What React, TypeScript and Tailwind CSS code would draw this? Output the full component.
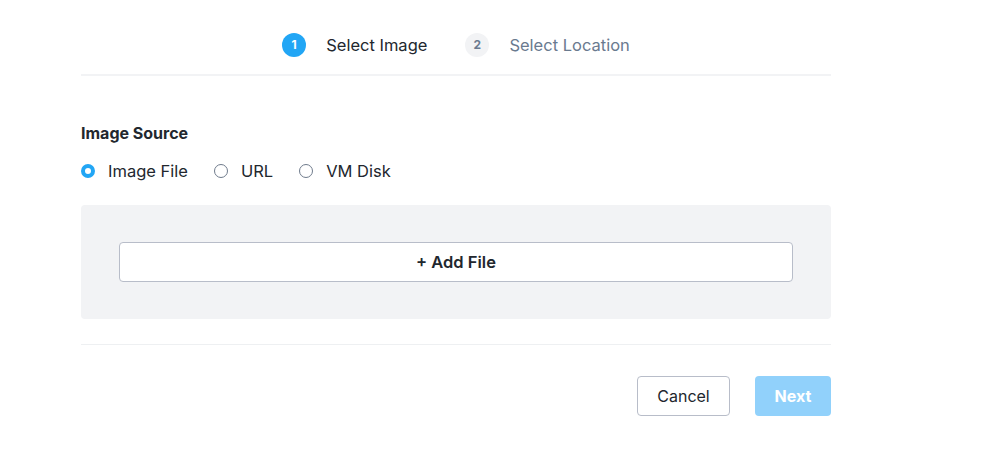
import React from "react";

export default function App() {
  return (
    <div className="w-[1002px] h-[462px] bg-white" style={{ fontFamily: 'Inter, "Liberation Sans", sans-serif' }}>
      <div className="ml-[81px] w-[750px]">
        <div className="h-[76px] border-b-2 border-[#f2f3f5] flex items-center justify-center pt-[16px]">
          <div className="flex items-center gap-[20px]">
            <div className="w-[24px] h-[24px] rounded-full bg-[#22a6f5] text-white text-[12px] font-bold flex items-center justify-center">1</div>
            <span className="text-[16.5px] text-[#22272e]">Select Image</span>
          </div>
          <div className="flex items-center gap-[20px] ml-[38px]">
            <div className="w-[24px] h-[24px] rounded-full bg-[#f2f3f5] text-[#6a7a8f] text-[12px] font-bold flex items-center justify-center">2</div>
            <span className="text-[16.5px] text-[#6a7a8f]">Select Location</span>
          </div>
        </div>
        <div className="pt-[47px]">
          <div className="text-[16px] font-bold text-[#22272e] leading-[20px]">Image Source</div>
          <div className="flex items-center mt-[18px] h-[20px] text-[16.5px] text-[#22272e]">
            <span className="w-[14px] h-[14px] rounded-full border-[4px] border-[#22a6f5] bg-white"></span>
            <span className="ml-[13px]">Image File</span>
            <span className="ml-[26px] w-[14px] h-[14px] rounded-full border border-[#6f7b8c] bg-white"></span>
            <span className="ml-[13px]">URL</span>
            <span className="ml-[26px] w-[14px] h-[14px] rounded-full border border-[#6f7b8c] bg-white"></span>
            <span className="ml-[13px]">VM Disk</span>
          </div>
          <div className="mt-[24px] h-[114px] rounded-[4px] bg-[#f2f3f5] px-[38px] flex items-center">
            <button className="w-full h-[40px] rounded-[4px] border border-[#b8bdc9] bg-white text-[16.5px] font-semibold text-[#22272e] flex items-center justify-center">
              + Add File
            </button>
          </div>
          <div className="mt-[25px] border-t border-[#eef0f2]"></div>
          <div className="flex justify-end gap-[25px] mt-[31px]">
            <button className="w-[93px] h-[40px] rounded-[4px] border border-[#b8bdc9] bg-white text-[16px] text-[#22272e]">Cancel</button>
            <button className="w-[76px] h-[40px] rounded-[4px] bg-[#91d1fb] text-[16px] font-bold text-white">Next</button>
          </div>
        </div>
      </div>
    </div>
  );
}
